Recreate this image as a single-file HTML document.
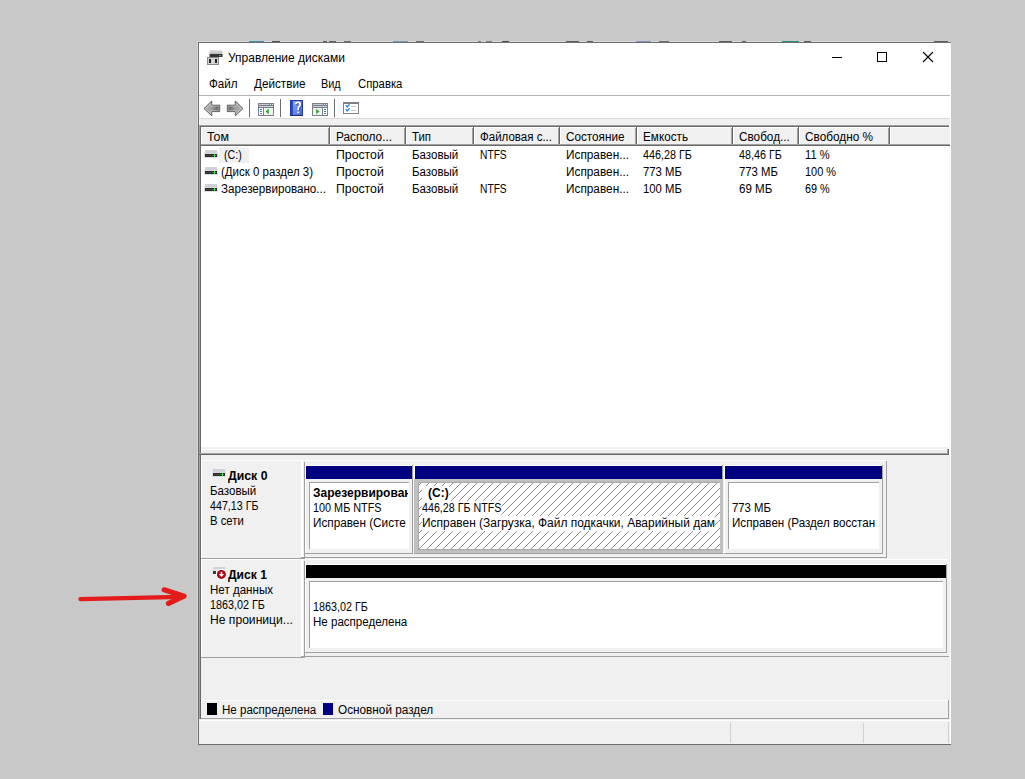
<!DOCTYPE html>
<html><head><meta charset="utf-8">
<style>
*{margin:0;padding:0;box-sizing:border-box}
html,body{width:1025px;height:779px;overflow:hidden;background:#c8c8c8}
body{position:relative;font-family:"Liberation Sans",sans-serif;font-size:12px;color:#000}
.a{position:absolute}
.t{position:absolute;white-space:nowrap;line-height:15px;font-size:12px}
.b{font-weight:bold}
.clip{position:absolute;overflow:hidden}
</style></head><body>
<div class="a" style="left:197px;top:41px;width:754px;height:1px;background:#dadada;"></div>
<div class="a" style="left:249px;top:41px;width:15px;height:1px;background:#3f8fb0;"></div>
<div class="a" style="left:272px;top:41px;width:8px;height:1px;background:#505050;"></div>
<div class="a" style="left:323px;top:41px;width:4px;height:1px;background:#606060;"></div>
<div class="a" style="left:329px;top:41px;width:7px;height:1px;background:#606060;"></div>
<div class="a" style="left:344px;top:41px;width:7px;height:1px;background:#707070;"></div>
<div class="a" style="left:393px;top:41px;width:15px;height:1px;background:#7f95b8;"></div>
<div class="a" style="left:416px;top:41px;width:8px;height:1px;background:#707070;"></div>
<div class="a" style="left:478px;top:41px;width:3px;height:1px;background:#808080;"></div>
<div class="a" style="left:486px;top:41px;width:6px;height:1px;background:#808080;"></div>
<div class="a" style="left:502px;top:41px;width:7px;height:1px;background:#505050;"></div>
<div class="a" style="left:566px;top:41px;width:13px;height:1px;background:#606060;"></div>
<div class="a" style="left:587px;top:41px;width:6px;height:1px;background:#606060;"></div>
<div class="a" style="left:636px;top:41px;width:15px;height:1px;background:#7f95b8;"></div>
<div class="a" style="left:659px;top:41px;width:10px;height:1px;background:#707070;"></div>
<div class="a" style="left:719px;top:41px;width:13px;height:1px;background:#606060;"></div>
<div class="a" style="left:742px;top:41px;width:4px;height:1px;background:#606060;"></div>
<div class="a" style="left:782px;top:41px;width:17px;height:1px;background:#2f8a80;"></div>
<div class="a" style="left:804px;top:41px;width:7px;height:1px;background:#606060;"></div>
<div class="a" style="left:934px;top:41px;width:14px;height:1px;background:#606060;"></div>
<div class="a" style="left:197px;top:43px;width:1px;height:701px;background:#d6d6d6;"></div>
<div class="a" style="left:198px;top:42px;width:753px;height:703px;background:#fff;"></div>
<div class="a" style="left:198px;top:42px;width:753px;height:1px;background:#6e6e6e;"></div>
<div class="a" style="left:198px;top:42px;width:1px;height:703px;background:#6e6e6e;"></div>
<div class="a" style="left:198px;top:744px;width:753px;height:1px;background:#6e6e6e;"></div>
<svg class="a" style="left:207px;top:50px" width="16" height="16" viewBox="0 0 16 16">
<defs><linearGradient id="dtop" x1="0" y1="0" x2="0" y2="1"><stop offset="0" stop-color="#e4e4e4"/><stop offset="1" stop-color="#b8b8b8"/></linearGradient></defs>
<rect x="2.5" y="0" width="13" height="4" rx="1" fill="url(#dtop)"/>
<rect x="2.5" y="4" width="13" height="3" fill="#333"/>
<rect x="12" y="5" width="1.5" height="1.2" fill="#2ee82e"/>
<rect x="0.5" y="7.5" width="11" height="7" fill="#d4d4d4" stroke="#8a8a8a" stroke-width="1"/>
<rect x="2" y="9" width="2" height="4" fill="#222"/>
<rect x="8" y="9" width="2" height="4" fill="#222"/>
</svg>
<div class="t" style="left:228px;top:51px;">Управление дисками</div>
<svg class="a" style="left:820px;top:44px" width="130" height="28">
 <rect x="12" y="13" width="10" height="1" fill="#000"/>
 <rect x="57.5" y="8.5" width="9" height="9" fill="none" stroke="#000" stroke-width="1"/>
 <line x1="103" y1="8" x2="113" y2="18" stroke="#000" stroke-width="1.1"/>
 <line x1="113" y1="8" x2="103" y2="18" stroke="#000" stroke-width="1.1"/>
</svg>
<div class="t" style="left:209px;top:77px;transform:scaleX(0.9690);transform-origin:0 0;">Файл</div>
<div class="t" style="left:254px;top:77px;transform:scaleX(0.9760);transform-origin:0 0;">Действие</div>
<div class="t" style="left:321px;top:77px;transform:scaleX(0.9071);transform-origin:0 0;">Вид</div>
<div class="t" style="left:358px;top:77px;transform:scaleX(0.9431);transform-origin:0 0;">Справка</div>
<div class="a" style="left:199px;top:95px;width:751px;height:1px;background:#b4b4b4;"></div>
<svg class="a" style="left:200px;top:96px" width="170" height="22" viewBox="0 0 170 22">
<defs>
<linearGradient id="agb" x1="0" y1="0" x2="1" y2="0"><stop offset="0" stop-color="#b4b4b4"/><stop offset="0.45" stop-color="#a2a2a2"/><stop offset="1" stop-color="#5c5c5c"/></linearGradient><linearGradient id="agf" x1="1" y1="0" x2="0" y2="0"><stop offset="0" stop-color="#b4b4b4"/><stop offset="0.45" stop-color="#a2a2a2"/><stop offset="1" stop-color="#5c5c5c"/></linearGradient>
<linearGradient id="hg2" x1="0" y1="0" x2="1" y2="1"><stop offset="0" stop-color="#8aa6f4"/><stop offset="1" stop-color="#3f66dc"/></linearGradient>
</defs>
<polygon points="4,12.5 11.7,5 11.7,9.2 19.7,9.2 19.7,15.6 11.7,15.6 11.7,19.8" fill="url(#agb)" stroke="#5e5e5e" stroke-width="1" stroke-linejoin="round"/><polygon points="5.5,12.5 10.8,7.3 10.8,10.1 18.8,10.1 18.8,14.7 10.8,14.7 10.8,17.7" fill="none" stroke="#e6e6e6" stroke-opacity="0.55" stroke-width="0.8"/>
<polygon points="43,12.5 35.3,5 35.3,9.2 27.3,9.2 27.3,15.6 35.3,15.6 35.3,19.8" fill="url(#agf)" stroke="#5e5e5e" stroke-width="1" stroke-linejoin="round"/><polygon points="41.5,12.5 36.2,7.3 36.2,10.1 28.2,10.1 28.2,14.7 36.2,14.7 36.2,17.7" fill="none" stroke="#e6e6e6" stroke-opacity="0.55" stroke-width="0.8"/>
<rect x="49" y="3" width="1" height="18" fill="#6d6d6d"/>
<!-- show/hide tree -->
<rect x="58" y="7" width="16" height="13" fill="#7a7f88"/>
<rect x="59" y="8" width="10" height="1" fill="#c5cad3"/><rect x="70" y="8" width="1" height="1" fill="#eef0f4"/><rect x="72" y="8" width="1" height="1" fill="#eef0f4"/>
<rect x="59" y="10" width="14" height="1" fill="#ccd0d8"/>
<rect x="59" y="12" width="4" height="7" fill="#fff"/>
<rect x="64" y="12" width="9" height="7" fill="#f3f3f3"/>
<rect x="60" y="13" width="2" height="1" fill="#3a78c8"/><rect x="60" y="15" width="2" height="1" fill="#3a78c8"/><rect x="60" y="17" width="2" height="1" fill="#3a78c8"/>
<polygon points="65.6,15.5 68.8,12.8 68.8,18.2" fill="#2aa82a"/>
<rect x="80" y="3" width="1" height="18" fill="#6d6d6d"/>
<!-- help -->
<rect x="90" y="4" width="13" height="16" fill="#2238a8"/>
<rect x="93" y="5" width="9" height="14" fill="url(#hg2)"/>
<rect x="91" y="5" width="2" height="14" fill="#2c48c0"/>
<rect x="90" y="19" width="13" height="1" fill="#1c2a78"/>
<path d="M95.6,8.4 C95.9,6.9 97,6.3 98,6.3 C99.5,6.3 100.3,7.3 100.3,8.5 C100.3,10.2 98.5,10.8 98.2,12.4 L98.2,14.2" stroke="#2a3f90" stroke-width="1.7" fill="none" transform="translate(0.7,0.6)"/>
<path d="M95.6,8.4 C95.9,6.9 97,6.3 98,6.3 C99.5,6.3 100.3,7.3 100.3,8.5 C100.3,10.2 98.5,10.8 98.2,12.4 L98.2,14.2" stroke="#fff" stroke-width="1.7" fill="none"/>
<rect x="97.3" y="15.5" width="1.8" height="1.8" fill="#fff"/>
<!-- show action pane -->
<rect x="112" y="7" width="16" height="13" fill="#7a7f88"/>
<rect x="113" y="8" width="10" height="1" fill="#c5cad3"/><rect x="124" y="8" width="1" height="1" fill="#eef0f4"/><rect x="126" y="8" width="1" height="1" fill="#eef0f4"/>
<rect x="113" y="10" width="14" height="1" fill="#ccd0d8"/>
<rect x="113" y="12" width="9" height="7" fill="#f3f3f3"/>
<rect x="123" y="12" width="4" height="7" fill="#fff"/>
<rect x="124" y="13" width="2" height="1" fill="#3a78c8"/><rect x="124" y="15" width="2" height="1" fill="#3a78c8"/><rect x="124" y="17" width="2" height="1" fill="#3a78c8"/>
<polygon points="116.2,12.8 119.4,15.5 116.2,18.2" fill="#2aa82a"/>
<rect x="134" y="3" width="1" height="18" fill="#6d6d6d"/>
<!-- properties -->
<rect x="143.5" y="6.5" width="15" height="11" fill="#fff" stroke="#7a7f88" stroke-width="1"/>
<rect x="144" y="7" width="14" height="1" fill="#7a7f88"/>
<path d="M145.8,9.2 l1.4,1.7 l2.4,-2.6 M145.8,13.2 l1.4,1.7 l2.4,-2.6" stroke="#2f86e0" stroke-width="1.3" fill="none"/>
<rect x="151" y="10" width="5" height="1" fill="#c0c3c8"/><rect x="151" y="14" width="5" height="1" fill="#c0c3c8"/>
</svg>
<div class="a" style="left:199px;top:118px;width:751px;height:1px;background:#dadada;"></div>
<div class="a" style="left:199px;top:119px;width:751px;height:6px;background:#f0f0f0;"></div>
<div class="a" style="left:199px;top:119px;width:1px;height:6px;background:#fff;"></div>
<div class="a" style="left:199px;top:125px;width:751px;height:322px;background:#fff;"></div>
<div class="a" style="left:199px;top:125px;width:750px;height:1px;background:#a0a0a0;"></div>
<div class="a" style="left:199px;top:125px;width:1px;height:322px;background:#a0a0a0;"></div>
<div class="a" style="left:200px;top:126px;width:749px;height:1px;background:#696969;"></div>
<div class="a" style="left:200px;top:126px;width:1px;height:321px;background:#696969;"></div>
<div class="a" style="left:949px;top:125px;width:1px;height:322px;background:#f6f6f6;"></div>
<div class="a" style="left:201px;top:127px;width:129px;height:19px;background:#f0f0f0;"></div>
<div class="a" style="left:201px;top:127px;width:129px;height:1px;background:#fff;"></div>
<div class="a" style="left:201px;top:127px;width:1px;height:19px;background:#fff;"></div>
<div class="a" style="left:328px;top:128px;width:1px;height:17px;background:#a0a0a0;"></div>
<div class="a" style="left:329px;top:127px;width:1px;height:19px;background:#696969;"></div>
<div class="a" style="left:201px;top:144px;width:129px;height:1px;background:#a0a0a0;"></div>
<div class="a" style="left:201px;top:145px;width:129px;height:1px;background:#696969;"></div>
<div class="t" style="left:207px;top:130px;transform:scaleX(1.0315);transform-origin:0 0;">Том</div>
<div class="a" style="left:330px;top:127px;width:76px;height:19px;background:#f0f0f0;"></div>
<div class="a" style="left:330px;top:127px;width:76px;height:1px;background:#fff;"></div>
<div class="a" style="left:330px;top:127px;width:1px;height:19px;background:#fff;"></div>
<div class="a" style="left:404px;top:128px;width:1px;height:17px;background:#a0a0a0;"></div>
<div class="a" style="left:405px;top:127px;width:1px;height:19px;background:#696969;"></div>
<div class="a" style="left:330px;top:144px;width:76px;height:1px;background:#a0a0a0;"></div>
<div class="a" style="left:330px;top:145px;width:76px;height:1px;background:#696969;"></div>
<div class="t" style="left:336px;top:130px;transform:scaleX(0.9825);transform-origin:0 0;">Располо...</div>
<div class="a" style="left:406px;top:127px;width:68px;height:19px;background:#f0f0f0;"></div>
<div class="a" style="left:406px;top:127px;width:68px;height:1px;background:#fff;"></div>
<div class="a" style="left:406px;top:127px;width:1px;height:19px;background:#fff;"></div>
<div class="a" style="left:472px;top:128px;width:1px;height:17px;background:#a0a0a0;"></div>
<div class="a" style="left:473px;top:127px;width:1px;height:19px;background:#696969;"></div>
<div class="a" style="left:406px;top:144px;width:68px;height:1px;background:#a0a0a0;"></div>
<div class="a" style="left:406px;top:145px;width:68px;height:1px;background:#696969;"></div>
<div class="t" style="left:412px;top:130px;transform:scaleX(0.9493);transform-origin:0 0;">Тип</div>
<div class="a" style="left:474px;top:127px;width:86px;height:19px;background:#f0f0f0;"></div>
<div class="a" style="left:474px;top:127px;width:86px;height:1px;background:#fff;"></div>
<div class="a" style="left:474px;top:127px;width:1px;height:19px;background:#fff;"></div>
<div class="a" style="left:558px;top:128px;width:1px;height:17px;background:#a0a0a0;"></div>
<div class="a" style="left:559px;top:127px;width:1px;height:19px;background:#696969;"></div>
<div class="a" style="left:474px;top:144px;width:86px;height:1px;background:#a0a0a0;"></div>
<div class="a" style="left:474px;top:145px;width:86px;height:1px;background:#696969;"></div>
<div class="t" style="left:480px;top:130px;transform:scaleX(0.9592);transform-origin:0 0;">Файловая с...</div>
<div class="a" style="left:560px;top:127px;width:77px;height:19px;background:#f0f0f0;"></div>
<div class="a" style="left:560px;top:127px;width:77px;height:1px;background:#fff;"></div>
<div class="a" style="left:560px;top:127px;width:1px;height:19px;background:#fff;"></div>
<div class="a" style="left:635px;top:128px;width:1px;height:17px;background:#a0a0a0;"></div>
<div class="a" style="left:636px;top:127px;width:1px;height:19px;background:#696969;"></div>
<div class="a" style="left:560px;top:144px;width:77px;height:1px;background:#a0a0a0;"></div>
<div class="a" style="left:560px;top:145px;width:77px;height:1px;background:#696969;"></div>
<div class="t" style="left:566px;top:130px;transform:scaleX(0.9768);transform-origin:0 0;">Состояние</div>
<div class="a" style="left:637px;top:127px;width:96px;height:19px;background:#f0f0f0;"></div>
<div class="a" style="left:637px;top:127px;width:96px;height:1px;background:#fff;"></div>
<div class="a" style="left:637px;top:127px;width:1px;height:19px;background:#fff;"></div>
<div class="a" style="left:731px;top:128px;width:1px;height:17px;background:#a0a0a0;"></div>
<div class="a" style="left:732px;top:127px;width:1px;height:19px;background:#696969;"></div>
<div class="a" style="left:637px;top:144px;width:96px;height:1px;background:#a0a0a0;"></div>
<div class="a" style="left:637px;top:145px;width:96px;height:1px;background:#696969;"></div>
<div class="t" style="left:643px;top:130px;transform:scaleX(0.9769);transform-origin:0 0;">Емкость</div>
<div class="a" style="left:733px;top:127px;width:66px;height:19px;background:#f0f0f0;"></div>
<div class="a" style="left:733px;top:127px;width:66px;height:1px;background:#fff;"></div>
<div class="a" style="left:733px;top:127px;width:1px;height:19px;background:#fff;"></div>
<div class="a" style="left:797px;top:128px;width:1px;height:17px;background:#a0a0a0;"></div>
<div class="a" style="left:798px;top:127px;width:1px;height:19px;background:#696969;"></div>
<div class="a" style="left:733px;top:144px;width:66px;height:1px;background:#a0a0a0;"></div>
<div class="a" style="left:733px;top:145px;width:66px;height:1px;background:#696969;"></div>
<div class="t" style="left:739px;top:130px;transform:scaleX(0.9793);transform-origin:0 0;">Свобод...</div>
<div class="a" style="left:799px;top:127px;width:91px;height:19px;background:#f0f0f0;"></div>
<div class="a" style="left:799px;top:127px;width:91px;height:1px;background:#fff;"></div>
<div class="a" style="left:799px;top:127px;width:1px;height:19px;background:#fff;"></div>
<div class="a" style="left:888px;top:128px;width:1px;height:17px;background:#a0a0a0;"></div>
<div class="a" style="left:889px;top:127px;width:1px;height:19px;background:#696969;"></div>
<div class="a" style="left:799px;top:144px;width:91px;height:1px;background:#a0a0a0;"></div>
<div class="a" style="left:799px;top:145px;width:91px;height:1px;background:#696969;"></div>
<div class="t" style="left:805px;top:130px;transform:scaleX(0.9831);transform-origin:0 0;">Свободно %</div>
<div class="a" style="left:890px;top:127px;width:60px;height:19px;background:#f0f0f0;"></div>
<div class="a" style="left:890px;top:127px;width:60px;height:1px;background:#fff;"></div>
<div class="a" style="left:890px;top:127px;width:1px;height:19px;background:#fff;"></div>
<div class="a" style="left:890px;top:144px;width:60px;height:1px;background:#a0a0a0;"></div>
<div class="a" style="left:890px;top:145px;width:60px;height:1px;background:#696969;"></div>
<div class="a" style="left:219px;top:147px;width:30px;height:16px;background:#f0f0f0;"></div>
<svg class="a" style="left:204px;top:150px" width="14" height="9" viewBox="0 0 14 9">
<rect x="0" y="2.5" width="14" height="5.5" fill="#dde0e4"/>
<rect x="1" y="0" width="12" height="3.5" fill="#cfd2d7"/>
<rect x="1" y="4" width="12" height="3" fill="#2b2b2b"/>
<rect x="2" y="5" width="7" height="1" fill="#454545"/>
<rect x="9.5" y="5" width="2" height="1" fill="#3cf03c"/><rect x="10" y="4" width="1" height="3" fill="#3cf03c"/>
</svg>
<div class="t" style="left:224px;top:148px;transform:scaleX(0.8850);transform-origin:0 0;">(C:)</div>
<div class="t" style="left:336px;top:148px;transform:scaleX(1.0231);transform-origin:0 0;">Простой</div>
<div class="t" style="left:412px;top:148px;transform:scaleX(0.9611);transform-origin:0 0;">Базовый</div>
<div class="t" style="left:480px;top:148px;transform:scaleX(0.8518);transform-origin:0 0;">NTFS</div>
<div class="t" style="left:566px;top:148px;transform:scaleX(0.9841);transform-origin:0 0;">Исправен...</div>
<div class="t" style="left:643px;top:148px;transform:scaleX(0.8985);transform-origin:0 0;">446,28 ГБ</div>
<div class="t" style="left:739px;top:148px;transform:scaleX(0.8963);transform-origin:0 0;">48,46 ГБ</div>
<div class="t" style="left:805px;top:148px;transform:scaleX(0.9332);transform-origin:0 0;">11 %</div>
<svg class="a" style="left:204px;top:167px" width="14" height="9" viewBox="0 0 14 9">
<rect x="0" y="2.5" width="14" height="5.5" fill="#dde0e4"/>
<rect x="1" y="0" width="12" height="3.5" fill="#cfd2d7"/>
<rect x="1" y="4" width="12" height="3" fill="#2b2b2b"/>
<rect x="2" y="5" width="7" height="1" fill="#454545"/>
<rect x="9.5" y="5" width="2" height="1" fill="#3cf03c"/><rect x="10" y="4" width="1" height="3" fill="#3cf03c"/>
</svg>
<div class="t" style="left:221px;top:165px;transform:scaleX(0.9568);transform-origin:0 0;">(Диск 0 раздел 3)</div>
<div class="t" style="left:336px;top:165px;transform:scaleX(1.0231);transform-origin:0 0;">Простой</div>
<div class="t" style="left:412px;top:165px;transform:scaleX(0.9611);transform-origin:0 0;">Базовый</div>
<div class="t" style="left:566px;top:165px;transform:scaleX(0.9841);transform-origin:0 0;">Исправен...</div>
<div class="t" style="left:643px;top:165px;transform:scaleX(0.9434);transform-origin:0 0;">773 МБ</div>
<div class="t" style="left:739px;top:165px;transform:scaleX(0.9434);transform-origin:0 0;">773 МБ</div>
<div class="t" style="left:805px;top:165px;transform:scaleX(0.9109);transform-origin:0 0;">100 %</div>
<svg class="a" style="left:204px;top:184px" width="14" height="9" viewBox="0 0 14 9">
<rect x="0" y="2.5" width="14" height="5.5" fill="#dde0e4"/>
<rect x="1" y="0" width="12" height="3.5" fill="#cfd2d7"/>
<rect x="1" y="4" width="12" height="3" fill="#2b2b2b"/>
<rect x="2" y="5" width="7" height="1" fill="#454545"/>
<rect x="9.5" y="5" width="2" height="1" fill="#3cf03c"/><rect x="10" y="4" width="1" height="3" fill="#3cf03c"/>
</svg>
<div class="t" style="left:221px;top:182px;transform:scaleX(0.9689);transform-origin:0 0;">Зарезервировано...</div>
<div class="t" style="left:336px;top:182px;transform:scaleX(1.0231);transform-origin:0 0;">Простой</div>
<div class="t" style="left:412px;top:182px;transform:scaleX(0.9611);transform-origin:0 0;">Базовый</div>
<div class="t" style="left:480px;top:182px;transform:scaleX(0.8518);transform-origin:0 0;">NTFS</div>
<div class="t" style="left:566px;top:182px;transform:scaleX(0.9841);transform-origin:0 0;">Исправен...</div>
<div class="t" style="left:643px;top:182px;transform:scaleX(0.9434);transform-origin:0 0;">100 МБ</div>
<div class="t" style="left:739px;top:182px;transform:scaleX(0.9664);transform-origin:0 0;">69 МБ</div>
<div class="t" style="left:805px;top:182px;transform:scaleX(0.9028);transform-origin:0 0;">69 %</div>
<div class="a" style="left:199px;top:447px;width:751px;height:8px;background:#f0f0f0;"></div>
<div class="a" style="left:199px;top:447px;width:1px;height:8px;background:#a0a0a0;"></div>
<div class="a" style="left:200px;top:447px;width:1px;height:8px;background:#696969;"></div>
<div class="a" style="left:201px;top:449px;width:747px;height:1px;background:#fff;"></div>
<div class="a" style="left:201px;top:449px;width:1px;height:4px;background:#fff;"></div>
<div class="a" style="left:202px;top:450px;width:746px;height:2px;background:#ececec;"></div>
<div class="a" style="left:199px;top:453px;width:750px;height:1px;background:#a0a0a0;"></div>
<div class="a" style="left:199px;top:454px;width:750px;height:1px;background:#696969;"></div>
<div class="a" style="left:947px;top:449px;width:1px;height:5px;background:#a0a0a0;"></div>
<div class="a" style="left:948px;top:449px;width:1px;height:6px;background:#696969;"></div>
<div class="a" style="left:949px;top:447px;width:1px;height:8px;background:#fff;"></div>
<div class="a" style="left:199px;top:455px;width:751px;height:264px;background:#f0f0f0;"></div>
<div class="a" style="left:199px;top:455px;width:2px;height:264px;background:#696969;"></div>
<div class="a" style="left:199px;top:455px;width:1px;height:264px;background:#a0a0a0;"></div>
<div class="a" style="left:949px;top:455px;width:1px;height:264px;background:#ececec;"></div>
<div class="a" style="left:201px;top:460px;width:103px;height:98px;background:#f0f0f0;"></div>
<div class="a" style="left:201px;top:460px;width:103px;height:1px;background:#fff;"></div>
<div class="a" style="left:201px;top:460px;width:1px;height:98px;background:#fff;"></div>
<div class="a" style="left:301px;top:461px;width:2px;height:96px;background:#fff;"></div>
<div class="a" style="left:304px;top:462px;width:1px;height:96px;background:#a0a0a0;"></div>
<div class="a" style="left:201px;top:558px;width:104px;height:1px;background:#a0a0a0;"></div>
<svg class="a" style="left:212px;top:469px" width="14" height="9" viewBox="0 0 14 9">
<rect x="0" y="2.5" width="14" height="5.5" fill="#dde0e4"/>
<rect x="1" y="0" width="12" height="3.5" fill="#cfd2d7"/>
<rect x="1" y="4" width="12" height="3" fill="#2b2b2b"/>
<rect x="2" y="5" width="7" height="1" fill="#454545"/>
<rect x="9.5" y="5" width="2" height="1" fill="#3cf03c"/><rect x="10" y="4" width="1" height="3" fill="#3cf03c"/>
</svg>
<div class="t b" style="left:228px;top:469px;transform:scaleX(1.0227);transform-origin:0 0;">Диск 0</div>
<div class="t" style="left:210px;top:484px;transform:scaleX(0.9611);transform-origin:0 0;">Базовый</div>
<div class="t" style="left:210px;top:499px;transform:scaleX(0.8912);transform-origin:0 0;">447,13 ГБ</div>
<div class="t" style="left:210px;top:514px;transform:scaleX(0.9410);transform-origin:0 0;">В сети</div>
<div class="a" style="left:305px;top:460px;width:581px;height:1px;background:#fff;"></div>
<div class="a" style="left:886px;top:461px;width:1px;height:97px;background:#a0a0a0;"></div>
<div class="a" style="left:301px;top:557px;width:586px;height:1px;background:#a0a0a0;"></div>
<div class="a" style="left:305px;top:465px;width:107px;height:1px;background:#fff;"></div>
<div class="a" style="left:305px;top:465px;width:1px;height:88px;background:#fff;"></div>
<div class="a" style="left:306px;top:466px;width:106px;height:13px;background:#000080;"></div>
<div class="a" style="left:412px;top:465px;width:1px;height:89px;background:#a0a0a0;"></div>
<div class="a" style="left:305px;top:553px;width:108px;height:1px;background:#a0a0a0;"></div>
<div class="a" style="left:309px;top:482px;width:100px;height:1px;background:#a0a0a0;"></div>
<div class="a" style="left:309px;top:482px;width:1px;height:67px;background:#a0a0a0;"></div>
<div class="a" style="left:310px;top:483px;width:99px;height:66px;background:#fff;"></div>
<div class="clip" style="left:310px;top:483px;width:98px;height:66px">
<div class="t b" style="left:3px;top:3px;padding-left:0px;">Зарезервирован</div>
<div class="t" style="left:3px;top:18px;padding-left:0px;transform:scaleX(0.9039);transform-origin:0 0;">100 МБ NTFS</div>
<div class="t" style="left:3px;top:33px;padding-left:0px;transform:scaleX(0.9794);transform-origin:0 0;">Исправен (Систе</div>
</div>
<div class="a" style="left:414px;top:465px;width:308px;height:1px;background:#fff;"></div>
<div class="a" style="left:414px;top:465px;width:1px;height:88px;background:#fff;"></div>
<div class="a" style="left:415px;top:466px;width:307px;height:13px;background:#000080;"></div>
<div class="a" style="left:722px;top:465px;width:1px;height:89px;background:#a0a0a0;"></div>
<div class="a" style="left:414px;top:553px;width:309px;height:1px;background:#a0a0a0;"></div>
<div class="a" style="left:414px;top:479px;width:309px;height:74px;background:#c0c0c0;"></div>
<div class="a" style="left:418px;top:482px;width:302px;height:1px;background:#a8a8a8;"></div>
<div class="a" style="left:418px;top:482px;width:1px;height:67px;background:#a8a8a8;"></div>
<div class="a" style="left:418px;top:549px;width:302px;height:1px;background:#a8a8a8;"></div>
<svg class="a" style="left:419px;top:483px" width="301" height="66" shape-rendering="crispEdges"><defs><pattern id="hp419_483" width="8" height="8" patternUnits="userSpaceOnUse"><rect width="8" height="8" fill="#fff"/><g fill="#8c8c8c"><rect x="0" y="1" width="1" height="1"/><rect x="1" y="0" width="1" height="1"/><rect x="2" y="7" width="1" height="1"/><rect x="3" y="6" width="1" height="1"/><rect x="4" y="5" width="1" height="1"/><rect x="5" y="4" width="1" height="1"/><rect x="6" y="3" width="1" height="1"/><rect x="7" y="2" width="1" height="1"/></g></pattern></defs><rect width="301" height="66" fill="url(#hp419_483)"/></svg>
<div class="clip" style="left:419px;top:483px;width:299px;height:66px">
<div class="t b" style="left:3px;top:3px;background:#fff;padding-left:6px;">(C:)</div>
<div class="t" style="left:3px;top:18px;background:#fff;padding-left:0px;transform:scaleX(0.8925);transform-origin:0 0;">446,28 ГБ NTFS</div>
<div class="t" style="left:3px;top:33px;background:#fff;padding-left:0px;transform:scaleX(0.9956);transform-origin:0 0;">Исправен (Загрузка, Файл подкачки, Аварийный дам</div>
</div>
<div class="a" style="left:724px;top:465px;width:158px;height:1px;background:#fff;"></div>
<div class="a" style="left:724px;top:465px;width:1px;height:88px;background:#fff;"></div>
<div class="a" style="left:725px;top:466px;width:157px;height:13px;background:#000080;"></div>
<div class="a" style="left:882px;top:465px;width:1px;height:89px;background:#a0a0a0;"></div>
<div class="a" style="left:724px;top:553px;width:159px;height:1px;background:#a0a0a0;"></div>
<div class="a" style="left:728px;top:482px;width:151px;height:1px;background:#a0a0a0;"></div>
<div class="a" style="left:728px;top:482px;width:1px;height:67px;background:#a0a0a0;"></div>
<div class="a" style="left:729px;top:483px;width:150px;height:66px;background:#fff;"></div>
<div class="clip" style="left:729px;top:483px;width:149px;height:66px">
<div class="t" style="left:3px;top:18px;padding-left:0px;transform:scaleX(0.9434);transform-origin:0 0;">773 МБ</div>
<div class="t" style="left:3px;top:33px;padding-left:0px;transform:scaleX(0.9674);transform-origin:0 0;">Исправен (Раздел восстан</div>
</div>
<div class="a" style="left:201px;top:559px;width:103px;height:98px;background:#f0f0f0;"></div>
<div class="a" style="left:201px;top:559px;width:103px;height:1px;background:#fff;"></div>
<div class="a" style="left:201px;top:559px;width:1px;height:98px;background:#fff;"></div>
<div class="a" style="left:301px;top:560px;width:2px;height:96px;background:#fff;"></div>
<div class="a" style="left:304px;top:561px;width:1px;height:96px;background:#a0a0a0;"></div>
<div class="a" style="left:201px;top:657px;width:104px;height:1px;background:#a0a0a0;"></div>
<svg class="a" style="left:212px;top:567px" width="16" height="16" viewBox="0 0 16 16">
<defs><radialGradient id="rg"><stop offset="0" stop-color="#d8101c"/><stop offset="0.6" stop-color="#c00818"/><stop offset="1" stop-color="#860410"/></radialGradient></defs>
<rect x="1" y="0" width="12" height="2" fill="#cfd2d7"/>
<rect x="0" y="2" width="6" height="5" fill="#e2e4e7"/>
<rect x="1" y="4" width="3" height="3" fill="#3a3a3a"/>
<circle cx="9.4" cy="7.4" r="5.6" fill="#fff"/>
<circle cx="9.4" cy="7.4" r="4.5" fill="url(#rg)"/>
<rect x="8.7" y="4.9" width="1.5" height="2.6" fill="#fff"/>
<polygon points="6.9,7.1 12,7.1 9.45,10.1" fill="#fff"/>
</svg>
<div class="t b" style="left:228px;top:568px;transform:scaleX(1.0071);transform-origin:0 0;">Диск 1</div>
<div class="t" style="left:210px;top:583px;transform:scaleX(0.9644);transform-origin:0 0;">Нет данных</div>
<div class="t" style="left:210px;top:598px;transform:scaleX(0.8986);transform-origin:0 0;">1863,02 ГБ</div>
<div class="t" style="left:210px;top:613px;transform:scaleX(1.0092);transform-origin:0 0;">Не проиници...</div>
<div class="a" style="left:305px;top:559px;width:643px;height:1px;background:#fff;"></div>
<div class="a" style="left:301px;top:656px;width:648px;height:1px;background:#a0a0a0;"></div>
<div class="a" style="left:305px;top:564px;width:641px;height:1px;background:#fff;"></div>
<div class="a" style="left:305px;top:564px;width:1px;height:88px;background:#fff;"></div>
<div class="a" style="left:306px;top:565px;width:640px;height:13px;background:#000000;"></div>
<div class="a" style="left:946px;top:564px;width:1px;height:89px;background:#a0a0a0;"></div>
<div class="a" style="left:305px;top:652px;width:642px;height:1px;background:#a0a0a0;"></div>
<div class="a" style="left:309px;top:581px;width:634px;height:1px;background:#a0a0a0;"></div>
<div class="a" style="left:309px;top:581px;width:1px;height:67px;background:#a0a0a0;"></div>
<div class="a" style="left:310px;top:582px;width:633px;height:66px;background:#fff;"></div>
<div class="clip" style="left:310px;top:582px;width:632px;height:66px">
<div class="t" style="left:3px;top:18px;padding-left:0px;transform:scaleX(0.8986);transform-origin:0 0;">1863,02 ГБ</div>
<div class="t" style="left:3px;top:33px;padding-left:0px;transform:scaleX(0.9626);transform-origin:0 0;">Не распределена</div>
</div>
<div class="a" style="left:201px;top:700px;width:748px;height:19px;background:#f0f0f0;"></div>
<div class="a" style="left:201px;top:700px;width:748px;height:1px;background:#fff;"></div>
<div class="a" style="left:201px;top:718px;width:748px;height:1px;background:#a0a0a0;"></div>
<div class="a" style="left:948px;top:700px;width:1px;height:19px;background:#a0a0a0;"></div>
<div class="a" style="left:207px;top:703px;width:10px;height:12px;background:#000;"></div>
<div class="t" style="left:222px;top:703px;transform:scaleX(0.9626);transform-origin:0 0;">Не распределена</div>
<div class="a" style="left:323px;top:703px;width:10px;height:12px;background:#000080;"></div>
<div class="t" style="left:338px;top:703px;transform:scaleX(0.9807);transform-origin:0 0;">Основной раздел</div>
<div class="a" style="left:199px;top:719px;width:751px;height:25px;background:#f0f0f0;"></div>
<div class="a" style="left:199px;top:720px;width:751px;height:1px;background:#fff;"></div>
<div class="a" style="left:730px;top:723px;width:1px;height:20px;background:#d0d0d0;"></div>
<div class="a" style="left:863px;top:723px;width:1px;height:20px;background:#d0d0d0;"></div>
<div class="a" style="left:948px;top:722px;width:1px;height:21px;background:#d0d0d0;"></div>
<svg class="a" style="left:70px;top:580px" width="130" height="35" viewBox="0 0 130 35">
<path d="M10.5,19.2 L110,16.9" stroke="#e31b1b" stroke-width="4.3" stroke-linecap="round" fill="none"/>
<path d="M94.2,9.8 L114,16.2 L98.5,23.4" stroke="#e31b1b" stroke-width="5.2" stroke-linecap="round" stroke-linejoin="round" fill="none"/>
</svg>
</body></html>
